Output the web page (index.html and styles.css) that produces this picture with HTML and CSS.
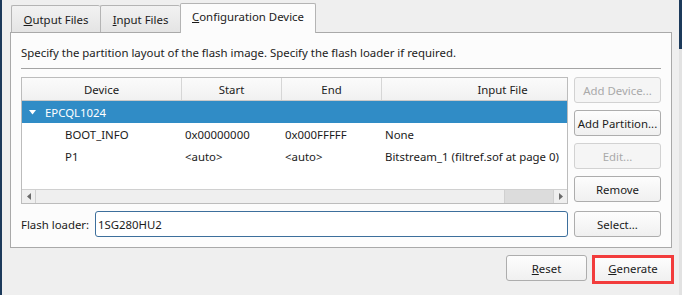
FILE: index.html
```html
<!DOCTYPE html>
<html>
<head>
<title>Configuration Device</title>
<link rel="stylesheet" href="styles.css">
</head>
<body>

<div class="window">
    <div class="main">

        <!-- tab bar -->
        <div class="tabs">
            <div class="tab tab-output"><u>O</u>utput Files</div>
            <div class="tab tab-input"><u>I</u>nput Files</div>
            <div class="tab tab-config active"><u>C</u>onfiguration Device</div>
        </div>

        <!-- tab page -->
        <div class="panel">
            <p class="desc">Specify the partition layout of the flash image. Specify the flash loader if required.</p>
            <div class="rule"></div>

            <div class="content">
                <div class="table">
                    <div class="table-body">
                        <div class="row head">
                            <div class="cell">Device</div>
                            <div class="cell">Start</div>
                            <div class="cell">End</div>
                            <div class="cell">Input File</div>
                        </div>
                        <div class="row selected">
                            <div class="cell device">
                                <svg width="7" height="5" viewBox="0 0 7 5"><polygon points="0,0 7,0 3.5,4.5" fill="#ffffff"/></svg>
                                <span>EPCQL1024</span>
                            </div>
                            <div class="cell"></div>
                            <div class="cell"></div>
                            <div class="cell"></div>
                        </div>
                        <div class="row">
                            <div class="cell child">BOOT_INFO</div>
                            <div class="cell">0x00000000</div>
                            <div class="cell">0x000FFFFF</div>
                            <div class="cell">None</div>
                        </div>
                        <div class="row">
                            <div class="cell child">P1</div>
                            <div class="cell">&lt;auto&gt;</div>
                            <div class="cell">&lt;auto&gt;</div>
                            <div class="cell">Bitstream_1 (filtref.sof at page 0)</div>
                        </div>
                    </div>

                    <!-- horizontal scrollbar -->
                    <div class="hscroll">
                        <div class="arrow arrow-left">
                            <svg width="4" height="7" viewBox="0 0 4 7"><polygon points="4,0 4,7 0,3.5" fill="#6a6a6a"/></svg>
                        </div>
                        <div class="track"></div>
                        <div class="thumb"></div>
                        <div class="arrow arrow-right">
                            <svg width="4" height="7" viewBox="0 0 4 7"><polygon points="0,0 0,7 4,3.5" fill="#6a6a6a"/></svg>
                        </div>
                    </div>
                </div>

                <div class="side-buttons">
                    <button class="btn" disabled>Add Device...</button>
                    <button class="btn">Add Partition...</button>
                    <button class="btn" disabled>Edit...</button>
                    <button class="btn">Remove</button>
                </div>

                <div class="loader">
                    <label>Flash loader:</label>
                    <div class="field">1SG280HU2</div>
                </div>
                <button class="btn">Select...</button>
            </div>
        </div>

        <!-- dialog buttons -->
        <div class="footer">
            <button class="btn btn-reset"><u>R</u>eset</button>
            <button class="btn btn-generate"><u>G</u>enerate</button>
        </div>
    </div>

    <div class="edge-right"></div>
</div>

</body>
</html>
```

FILE: styles.css
```css
body {
    margin: 0;
    background-color: #efefef;
    font-family: "Noto Sans", "Open Sans", sans-serif;
    font-size: 11.4px;
    color: #1b1b1b;
}

.window {
    display: flex;
    height: 295px;
    border-left: 2px solid #1c3a5b;
}

.main {
    padding-left: 8px;
}

.edge-right {
    width: 3px;
    margin-left: auto;
    background: linear-gradient(#1c3a5b 0 49px, #e2e2e2 49px);
}

/* TABS */

.tabs {
    display: flex;
    align-items: flex-end;
    height: 32px;
    padding-left: 1px;
}

.tab {
    display: flex;
    align-items: center;
    justify-content: center;
    box-sizing: border-box;
    height: 27px;
    padding-top: 1px;
    border: 1px solid #b4b4b4;
    border-bottom: none;
    border-right: none;
    border-radius: 2px 2px 0 0;
    background: linear-gradient(#f2f2f2, #e4e4e4);
}

.tab-output {
    width: 89px;
}

.tab-input {
    width: 80px;
}

.tab-config {
    width: 136px;
    border-right: 1px solid #b4b4b4;
}

.tab.active {
    position: relative;
    z-index: 1;
    height: 30px;
    margin-bottom: -1px;
    padding-top: 0;
    padding-bottom: 4px;
    background: #fcfcfc;
}

/* PANEL */

.panel {
    width: 662px;
    box-sizing: border-box;
    border: 1px solid #a9a9a9;
    background-color: #fcfcfc;
    padding: 0 10px 10px;
}

.desc {
    margin: 0;
    padding-top: 11px;
    line-height: 18px;
}

.rule {
    height: 1px;
    margin-top: 6px;
    background-color: #a4a4a4;
}

.content {
    display: grid;
    grid-template-columns: 547px 87px;
    column-gap: 6px;
    row-gap: 7px;
    margin-top: 8px;
}

/* TABLE */

.table {
    display: flex;
    flex-direction: column;
    height: 127px;
    box-sizing: border-box;
    border: 1px solid #bcbcbc;
    background-color: #ffffff;
    overflow: hidden;
}

.table-body {
    flex: 1;
}

.row {
    display: grid;
    grid-template-columns: 160px 100px 100px 242px;
    height: 22px;
    align-items: center;
}

.row .cell {
    padding-left: 3px;
    white-space: nowrap;
}

.row.head {
    height: 23px;
    box-sizing: border-box;
    border-bottom: 1px solid #c9c9c9;
    background: linear-gradient(#fbfbfb, #f1f1f1);
    align-items: stretch;
}

.row.head .cell {
    display: flex;
    align-items: center;
    justify-content: center;
    padding-left: 0;
    border-right: 1px solid #d6d6d6;
}

.row.selected {
    background-color: #308cc6;
    color: #ffffff;
}

.row .cell.device {
    display: flex;
    align-items: center;
    gap: 9px;
    padding-left: 7px;
}

.row .cell.child {
    padding-left: 43px;
}

/* SCROLLBAR */

.hscroll {
    display: flex;
    height: 14px;
    box-sizing: border-box;
    border-top: 1px solid #d0d0d0;
    background-color: #efefef;
}

.arrow {
    display: flex;
    align-items: center;
    justify-content: center;
    width: 14px;
    box-sizing: border-box;
}

.arrow-left {
    border-right: 1px solid #d0d0d0;
}

.arrow-right {
    border-left: 1px solid #d0d0d0;
}

.track {
    flex: 1;
}

.thumb {
    width: 48px;
    border-left: 1px solid #d0d0d0;
    background-color: #dcdcdc;
}

/* BUTTONS */

.side-buttons {
    display: flex;
    flex-direction: column;
    gap: 7px;
}

.btn {
    height: 26px;
    box-sizing: border-box;
    padding: 0;
    border: 1px solid #adadad;
    border-radius: 3px;
    background: linear-gradient(#fdfdfd, #f0f0f0);
    font-family: "Noto Sans", "Open Sans", sans-serif;
    font-size: 11.4px;
    color: #1b1b1b;
}

.btn:disabled {
    border-color: #d2d2d2;
    background: #f5f5f5;
    color: #a9a9a9;
}

/* FLASH LOADER */

.loader {
    display: flex;
    align-items: center;
}

.loader label {
    width: 74px;
}

.field {
    flex: 1;
    height: 26px;
    box-sizing: border-box;
    display: flex;
    align-items: center;
    padding-left: 2px;
    border: 1px solid #3d6f9c;
    border-radius: 3px;
    background-color: #ffffff;
}

/* FOOTER */

.footer {
    display: flex;
    justify-content: flex-end;
    align-items: flex-start;
    gap: 5px;
    width: 664px;
    margin-top: 7px;
}

.btn-reset {
    width: 81px;
}

.btn-generate {
    width: 82px;
    height: 29px;
    border: 3px solid #f23c3c;
    border-radius: 0;
    padding-bottom: 2px;
}
```
